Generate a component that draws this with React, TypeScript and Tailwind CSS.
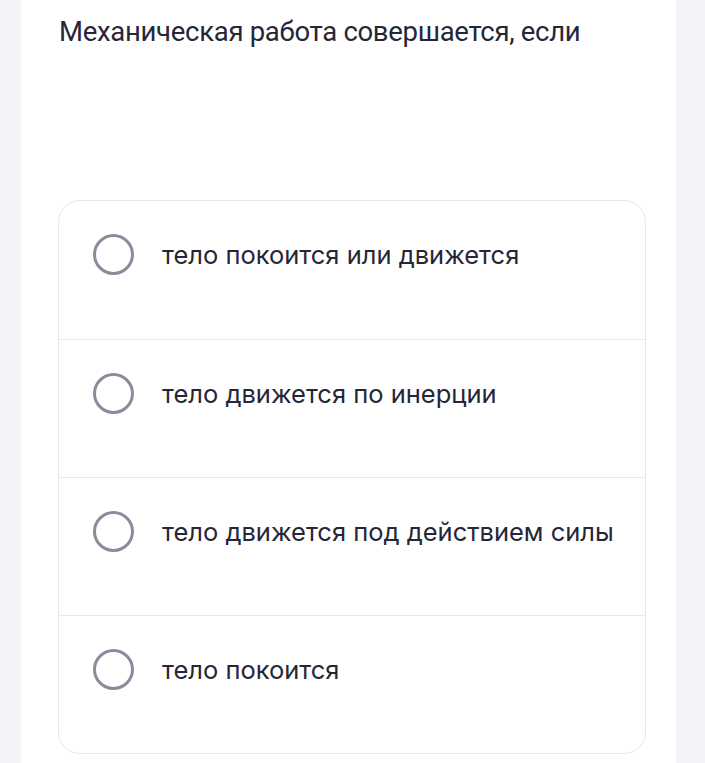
import React from "react";

const options = [
  "тело покоится или движется",
  "тело движется по инерции",
  "тело движется под действием силы",
  "тело покоится",
];

export default function App() {
  return (
    <div className="min-h-[763px] w-full bg-[#f3f3f8]" style={{ fontFamily: "Inter, 'Noto Sans', sans-serif" }}>
      <div className="ml-[21px] w-[655px] min-h-[763px] bg-white pl-[37px] pt-[14px]">
        <h1
          className="text-[27.5px] leading-[36px] font-normal tracking-[-0.3px] text-[#262637] pl-[1px]"
          style={{ fontFamily: "Roboto, 'Noto Sans', sans-serif" }}
        >
          Механическая работа совершается, если
        </h1>
        <div className="mt-[150px] w-[588px] rounded-[22px] border border-[#e6e6ee] overflow-hidden">
          {options.map((o, i) => (
            <div
              key={i}
              className={`flex h-[138px] items-start pl-[34px] pt-[33px] ${i > 0 ? "border-t border-[#e6e6ee]" : ""}`}
            >
              <div className="h-[41px] w-[41px] shrink-0 rounded-full border-[3px] border-[#8b8b9b]" />
              <span className="ml-[28px] mt-[5px] text-[25.5px] leading-[31px] text-[#262637]">{o}</span>
            </div>
          ))}
        </div>
      </div>
    </div>
  );
}
